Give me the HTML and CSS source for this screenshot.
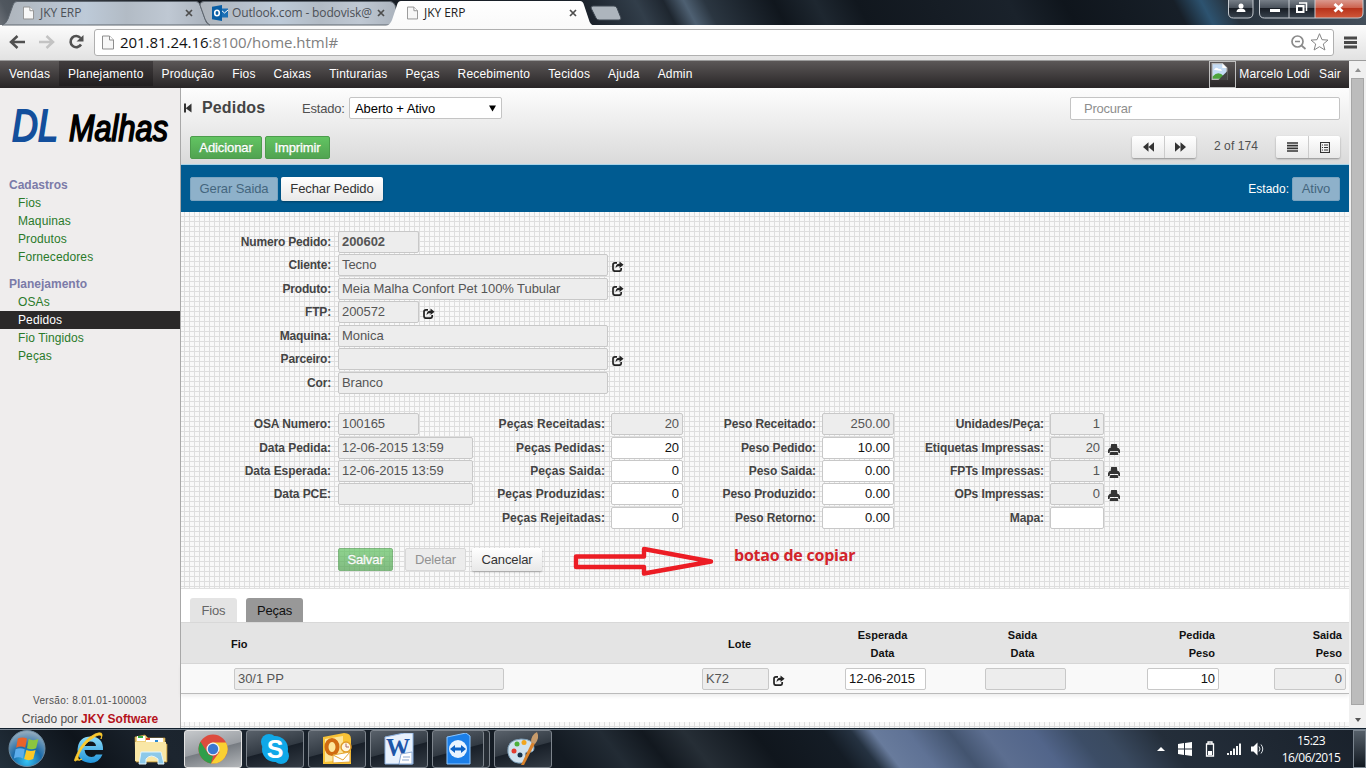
FILE: index.html
```html
<!DOCTYPE html>
<html lang="pt">
<head>
<meta charset="utf-8">
<title>JKY ERP</title>
<link rel="stylesheet" href="styles.css">
</head>
<body>
<svg width="0" height="0" class="defs">
  <defs>
    <symbol id="page" viewBox="0 0 12 14"><path d="M.5.5h7l4 4v9H.5z" fill="#f7f7f7" stroke="#8d8d8d"/><path d="M7.500.5v4h4" fill="#fff" stroke="#8d8d8d"/></symbol>
    <symbol id="x" viewBox="0 0 8 8"><path d="M1 1l6 6M7 1L1 7" stroke="#4d4d4d" stroke-width="1.700"/></symbol>
    <symbol id="share" viewBox="0 0 12 11"><path d="M5 1.800H3Q1 1.800 1 3.800v4.400q0 2 2 2h4.200q2 0 2-2V7" fill="none" stroke="#222" stroke-width="1.700"/><path d="M3.700 7.500C3.500 4 5.200 2.700 7.500 2.700V.6L11.600 3.800 7.500 7V5C5.700 5 4.500 5.700 3.700 7.500z" fill="#222"/></symbol>
    <symbol id="print" viewBox="0 0 12 11"><path d="M3.200 0h5.600l.7 4h-7z" fill="#333"/><path d="M1.500 4h9L12 6v3h-1.500L10 7H2L1.500 9H0V6z" fill="#333"/><path d="M2.300 8h7.400l.7 3H1.600z" fill="#333"/></symbol>
  </defs>
</svg>

<header class="titlebar">
  <svg class="tab-shapes" width="640" height="26" viewBox="0 0 640 26">
    <defs>
      <linearGradient id="tabg" x1="0" x2="1" y1="0" y2="0"><stop offset="0" stop-color="#aeb4bb"/><stop offset=".4" stop-color="#bdcad8"/><stop offset=".6" stop-color="#b2bbc5"/><stop offset=".8" stop-color="#bfc8d3"/><stop offset="1" stop-color="#a9b1bb"/></linearGradient>
      <linearGradient id="tabw" x1="0" x2="0" y1="0" y2="1"><stop offset="0" stop-color="#fff"/><stop offset="1" stop-color="#fafafa"/></linearGradient>
    </defs>
    <path d="M2 25Q6 24 8 19L13 5Q14 1.500 17 1.500H196Q199 1.500 200 5L205 19Q206 24 210 25z" fill="url(#tabg)" stroke="#5e666f"/>
    <path d="M210 25Q207 24 205 19L200 5Q200 1.500 204 1.500H390Q393 1.500 395 5L400 25z" fill="url(#tabg)" stroke="#5e666f"/>
    <path d="M386 26Q390 25 392 20L397 5Q398 1 401 1H580Q583 1 584 5L589 20Q590 25 595 26z" fill="url(#tabw)"/>
    <path d="M593 6H614Q616 6 617 8L621 18Q621 20 619 20H599Q597 20 596 18L591 8Q591 6 593 6z" fill="#adb5bd" stroke="#3d4650"/>
  </svg>
  <div class="tab tab-a"><svg class="pg"><use href="#page"/></svg><span>JKY ERP</span><svg class="cx"><use href="#x"/></svg></div>
  <div class="tab tab-b">
    <svg width="17" height="16" viewBox="0 0 17 16"><path d="M8 3.500h8v9H8z" fill="#1a6fb5"/><path d="M9 5l3.500 3L16 5" fill="none" stroke="#fff"/><path d="M0 1.700L10 0v16L0 14.300z" fill="#0a5fa5"/><ellipse cx="5" cy="8" rx="2.300" ry="2.800" fill="none" stroke="#fff" stroke-width="1.600"/></svg>
    <span>Outlook.com - bodovisk@</span><svg class="cx"><use href="#x"/></svg></div>
  <div class="tab tab-c"><svg class="pg"><use href="#page"/></svg><span>JKY ERP</span><svg class="cx"><use href="#x"/></svg></div>
  <svg class="winctl" width="140" height="20" viewBox="0 0 140 20">
    <defs><linearGradient id="red" x1="0" x2="0" y1="0" y2="1"><stop offset="0" stop-color="#dca096"/><stop offset=".45" stop-color="#cd6450"/><stop offset=".5" stop-color="#b8331b"/><stop offset="1" stop-color="#d0583a"/></linearGradient>
    <linearGradient id="dk" x1="0" x2="0" y1="0" y2="1"><stop offset="0" stop-color="#7c848d"/><stop offset=".45" stop-color="#4a525c"/><stop offset=".5" stop-color="#171d25"/><stop offset="1" stop-color="#39434e"/></linearGradient></defs>
    <path d="M2.500-1V13q0 5 5 5H22q5 0 5-5V-1z" fill="url(#dk)" stroke="#c5cad0"/>
    <circle cx="15" cy="6" r="2.500" fill="#fff"/><path d="M10.500 12q0-3.500 4.500-3.500t4.500 3.500z" fill="#fff"/>
    <path d="M34-1V13q0 5 5 5H89V-1z" fill="url(#dk)"/><path d="M89-1V18H132q5 0 5-5V-1z" fill="url(#red)"/>
    <path d="M33.500-1V13q0 5 5 5H132q5 0 5-5V-1M63 0V18M89 0V18" fill="none" stroke="#c5cad0"/>
    <path d="M44 9h10v3H44z" fill="#fff"/>
    <path d="M73 3h7.500v8" fill="none" stroke="#fff" stroke-width="1.500"/><rect x="71" y="6" width="6.500" height="6" fill="none" stroke="#fff" stroke-width="2"/>
    <path d="M108.500 4l8 7.500M116.500 4l-8 7.500" stroke="#fff" stroke-width="2.800"/>
  </svg>
</header>

<div class="toolbar">
  <svg width="86" height="20" viewBox="0 0 86 20">
    <path d="M3 10H17M9.500 4L3 10l6.500 6" fill="none" stroke="#505050" stroke-width="2.500"/>
    <path d="M31 10H45M38.500 4L45 10l-6.500 6" fill="none" stroke="#c3c3c3" stroke-width="2.500"/>
    <path d="M72.500 6A5.600 5.600 0 1 0 73 12.500" fill="none" stroke="#505050" stroke-width="2.600"/><path d="M75.500 3v6.500h-7z" fill="#505050"/>
  </svg>
  <div class="urlbox">
    <svg class="pg-url"><use href="#page"/></svg>
    <span class="url"><b>201.81.24.16</b>:8100/home.html#</span>
    <svg width="42" height="20" viewBox="0 0 42 20"><circle cx="8.500" cy="9.500" r="5.500" fill="none" stroke="#8b8b8b" stroke-width="1.700"/><path d="M6 9.500h5M12.500 13.500l4 3.500" stroke="#8b8b8b" stroke-width="1.700"/><path d="M30.500 1.700l2.500 6 6 .4-4.700 3.900 1.600 6-5.400-3.300-5.400 3.300 1.600-6L22 8.100l6-.4z" fill="#fff" stroke="#858585"/></svg>
  </div>
  <svg class="menu" width="13" height="13" viewBox="0 0 13 13"><path d="M0 2h13M0 6.500h13M0 11h13" stroke="#484848" stroke-width="2.800"/></svg>
</div>

<div class="viewport">
  <div class="page">
    <nav class="nav">
      <a>Vendas</a><a class="on">Planejamento</a><a>Produção</a><a>Fios</a><a>Caixas</a><a>Tinturarias</a><a>Peças</a><a>Recebimento</a><a>Tecidos</a><a>Ajuda</a><a>Admin</a>
      <div class="user">
        <span class="avatar"><svg width="17" height="17" viewBox="0 0 14 15"><path d="M.5.5h9l4 4v10H.5z" fill="#c5dcf5" stroke="#b9b9b9"/><path d="M9.500.5v4h4z" fill="#fff"/><path d="M2 6q2-3 4-1 3 0 3 2z" fill="#fff"/><path d="M1 14V12q5-6 10 0v2z" fill="#4da33c"/><path d="M6 15L14 7v8z" fill="#444"/></svg></span>
        <span class="name">Marcelo Lodi</span><span>Sair</span>
      </div>
    </nav>
    <div class="body">
      <aside class="side">
        <svg class="logo" width="180" height="88" viewBox="0 0 180 88"><text x="12" y="53" font-size="44" textLength="46" lengthAdjust="spacingAndGlyphs" fill="#134f9c" stroke="#134f9c" stroke-width="2">DL</text><text x="69" y="53" font-size="36" textLength="99" lengthAdjust="spacingAndGlyphs" stroke="#000" stroke-width="1.700">Malhas</text></svg>
        <h4>Cadastros</h4>
        <a>Fios</a><a>Maquinas</a><a>Produtos</a><a>Fornecedores</a>
        <h4>Planejamento</h4>
        <a>OSAs</a><a class="on">Pedidos</a><a>Fio Tingidos</a><a>Peças</a>
        <footer><p class="ver">Versão: 8.01.01-100003</p><p>Criado por <b>JKY Software</b></p></footer>
      </aside>
      <main class="main">
        <section class="head">
          <div class="head-row">
            <svg width="8" height="10" viewBox="0 0 8 10"><path d="M0 .5h2V5L7.500.5v9L2 5.500v4H0z" fill="#333"/></svg>
            <h1>Pedidos</h1><label>Estado:</label>
            <div class="select"><span>Aberto + Ativo</span><svg width="7" height="7" viewBox="0 0 7 7"><path d="M0 .5h7L3.500 6.500z"/></svg></div>
            <div class="search">Procurar</div>
          </div>
          <div class="act-row">
            <span class="btn green w72">Adicionar</span><span class="btn green w65">Imprimir</span>
            <div class="pager"><i><svg width="11" height="10" viewBox="0 0 11 10"><path d="M5.500.3v9.400L0 5zM11 .3v9.400L5.500 5z" fill="#333"/></svg></i><i><svg width="11" height="10" viewBox="0 0 11 10"><path d="M0 .3v9.400L5.500 5zM5.500.3v9.400L11 5z" fill="#333"/></svg></i></div>
            <span class="count">2 of 174</span>
            <div class="pager"><i><svg width="11" height="10" viewBox="0 0 11 10"><path d="M0 1h11M0 3.700h11M0 6.300h11M0 9h11" stroke="#333" stroke-width="1.700"/></svg></i><i><svg width="10" height="11" viewBox="0 0 10 11"><path d="M.5.500h9v10h-9z" fill="none" stroke="#333" stroke-width="1.200"/><path d="M2 3h1M4 3h4M2 5.500h1M4 5.500h4M2 8h1M4 8h4" stroke="#333"/></svg></i></div>
          </div>
        </section>
        <section class="blue">
          <span class="btn dim w88">Gerar Saida</span><span class="btn white w102">Fechar Pedido</span>
          <span class="st">Estado:</span><span class="btn dim w48">Ativo</span>
        </section>
        <section class="form">
          <div class="rows top">
            <div class="r"><label>Numero Pedido:</label><span class="f ro w81"><b>200602</b></span></div>
            <div class="r"><label>Cliente:</label><span class="f ro w270">Tecno</span><svg class="ic"><use href="#share"/></svg></div>
            <div class="r"><label>Produto:</label><span class="f ro w270">Meia Malha Confort Pet 100% Tubular</span><svg class="ic"><use href="#share"/></svg></div>
            <div class="r"><label>FTP:</label><span class="f ro w81">200572</span><svg class="ic"><use href="#share"/></svg></div>
            <div class="r"><label>Maquina:</label><span class="f ro w270">Monica</span></div>
            <div class="r"><label>Parceiro:</label><span class="f ro w270"></span><svg class="ic"><use href="#share"/></svg></div>
            <div class="r"><label>Cor:</label><span class="f ro w270">Branco</span></div>
          </div>
          <div class="cols">
            <div class="rows c1">
              <div class="r"><label>OSA Numero:</label><span class="f ro w81">100165</span></div>
              <div class="r"><label>Data Pedida:</label><span class="f ro w135">12-06-2015 13:59</span></div>
              <div class="r"><label>Data Esperada:</label><span class="f ro w135">12-06-2015 13:59</span></div>
              <div class="r"><label>Data PCE:</label><span class="f ro w135"></span></div>
            </div>
            <div class="rows c2">
              <div class="r"><label>Peças Receitadas:</label><span class="f num ro">20</span></div>
              <div class="r"><label>Peças Pedidas:</label><span class="f num">20</span></div>
              <div class="r"><label>Peças Saida:</label><span class="f num">0</span></div>
              <div class="r"><label>Peças Produzidas:</label><span class="f num">0</span></div>
              <div class="r"><label>Peças Rejeitadas:</label><span class="f num">0</span></div>
            </div>
            <div class="rows c3">
              <div class="r"><label>Peso Receitado:</label><span class="f num ro">250.00</span></div>
              <div class="r"><label>Peso Pedido:</label><span class="f num">10.00</span></div>
              <div class="r"><label>Peso Saida:</label><span class="f num">0.00</span></div>
              <div class="r"><label>Peso Produzido:</label><span class="f num">0.00</span></div>
              <div class="r"><label>Peso Retorno:</label><span class="f num">0.00</span></div>
            </div>
            <div class="rows c4">
              <div class="r"><label>Unidades/Peça:</label><span class="f num ro">1</span></div>
              <div class="r"><label>Etiquetas Impressas:</label><span class="f num ro">20</span><svg class="ic"><use href="#print"/></svg></div>
              <div class="r"><label>FPTs Impressas:</label><span class="f num ro">1</span><svg class="ic"><use href="#print"/></svg></div>
              <div class="r"><label>OPs Impressas:</label><span class="f num ro">0</span><svg class="ic"><use href="#print"/></svg></div>
              <div class="r"><label>Mapa:</label><span class="f num"></span></div>
            </div>
          </div>
          <div class="save-row">
            <span class="btn green faded w55">Salvar</span><span class="btn off w61">Deletar</span><span class="btn white w70">Cancelar</span>
          </div>
          <svg class="arrow" width="144" height="34" viewBox="0 0 144 34"><path d="M5 12.500H73V5L140 17.500 73 29.500V23H5z" fill="none" stroke="#ec1c24" stroke-width="4.400" stroke-linejoin="round"/></svg>
          <span class="note">botao de copiar</span>
        </section>
        <section class="list">
          <div class="tabs"><span class="t1">Fios</span><span class="t2">Peças</span></div>
          <div class="g th"><span class="h1c">Fio</span><span class="h2c">Lote</span><span class="ctr">Esperada<br>Data</span><span class="ctr">Saida<br>Data</span><span class="rgt">Pedida<br>Peso</span><span class="rgt">Saida<br>Peso</span></div>
          <div class="g td"><div class="first"><span class="f ro w270">30/1 PP</span></div><div class="lot"><span class="f ro w67">K72</span><svg class="ic"><use href="#share"/></svg></div><div><span class="f w81">12-06-2015</span></div><div><span class="f ro w81"></span></div><div><span class="f num">10</span></div><div><span class="f num ro">0</span></div></div>
        </section>
      </main>
    </div>
  </div>
  <div class="scroll"><span class="up"></span><span class="thumb"></span><span class="down"></span></div>
</div>

<footer class="taskbar">
  <svg class="launch" width="184" height="40" viewBox="0 0 184 40">
    <defs><radialGradient id="orb" cx=".5" cy=".85" r=".8"><stop offset="0" stop-color="#35c4f5"/><stop offset=".5" stop-color="#1a6aa8"/><stop offset="1" stop-color="#8fa9bd"/></radialGradient>
    <linearGradient id="ie" x1="0" x2="0" y1="0" y2="1"><stop offset="0" stop-color="#8ddcf9"/><stop offset="1" stop-color="#1f93da"/></linearGradient></defs>
    <circle cx="27" cy="19.500" r="18" fill="url(#orb)" stroke="#6c8aa0"/>
    <g transform="translate(-3.800 -3) scale(1.140)"><path d="M19 11q4-2 8 0l-1.500 8q-4-2-8 0z" fill="#e9632a"/><path d="M28.500 11.500q4 2 8.500 0l-2 8q-4 2-8 0z" fill="#8cc63f"/><path d="M17 20.500q4-2 8 0l-1.500 8q-4-2-8 0z" fill="#5cadec"/><path d="M26.500 21q4 2 8 0l-2 8q-4 2-8 0z" fill="#fbc827"/></g>
    <path d="M103 21H84.500q1 7 7 7 3 0 4.500-2.500h6.500Q99 34 90.500 34 77.500 33 77.500 20.500 78.500 7.500 91 7.500 103.500 8 103 21zM84.700 17H96q-.5-4.500-5.500-4.500t-5.800 4.500z" fill="url(#ie)"/>
    <path d="M77 31q-5 4 0-6Q83 11 95 5q10-4 6 5 2-6-5-3-12 7-17 18-3 8 3 5-2 2-5 1z" fill="#fbc92e" stroke="#fbc92e" stroke-width=".8"/>
    <path d="M135 8l10-2 3 3h17v6h2v18h-31z" fill="#efd17c" stroke="#c19a42" stroke-width=".7"/><path d="M137 7h8v5h-8zM146 9h17v5h-17z" fill="#fff"/><path d="M138 7h5v2h-5z" fill="#36a93f"/><path d="M146 9h4v2h-4z" fill="#d7402b"/><path d="M155 11h3v2h-3z" fill="#2c8bd2"/><path d="M135 13h31v19h-31z" fill="#f9e7a6"/><path d="M139 35l2-12h20l3 12h-6v-5q-7-6-12 0v5z" fill="#8dc9e9" stroke="#e2f5fd"/>
  </svg>
  <div class="tb act"><svg width="30" height="30" viewBox="0 0 30 30"><circle cx="15" cy="15" r="14.500" fill="#dd4b3e"/><path d="M2.500 7.700L11 21l4 1-2 7.400A14.500 14.500 0 0 1 2.500 7.700z" fill="#2f9e4a"/><path d="M14 8.500H28A14.500 14.500 0 0 1 13 29.400L21.500 18z" fill="#f9d032"/><circle cx="15" cy="15" r="6.500" fill="#f2f2f2"/><circle cx="15" cy="15" r="5.200" fill="#3b78d1"/></svg></div>
  <div class="tb"><svg width="30" height="30" viewBox="0 0 30 30"><circle cx="9" cy="8" r="8" fill="#10a8e8"/><circle cx="21" cy="22" r="8" fill="#10a8e8"/><circle cx="15" cy="15" r="13" fill="#10a8e8"/><text x="15" y="24" class="sk" text-anchor="middle">S</text></svg></div>
  <div class="tb"><svg width="30" height="32" viewBox="0 0 30 32"><path d="M1 4L22 0q7 0 7 6V31H1z" fill="#f8c236"/><path d="M3 6l18-3v24l-18 2z" fill="#fde69b"/><ellipse cx="10" cy="14" rx="5.500" ry="7" fill="none" stroke="#d06b12" stroke-width="4"/><circle cx="24" cy="14" r="5" fill="#fff6df" stroke="#e09c29" stroke-width="1.500"/><path d="M24 10.500V14h3" fill="none" stroke="#a66"/><path d="M11 22l17-3v10l-17 1z" fill="#fff" stroke="#e3a636"/><path d="M11 22l10 5 7-8" fill="none" stroke="#e3a636"/></svg></div>
  <div class="tb"><svg width="30" height="32" viewBox="0 0 30 32"><path d="M1 4L20 0h9V31H1z" fill="#e8f1fc" stroke="#8cb1e0"/><text x="14" y="23" class="wd" text-anchor="middle" textLength="24" lengthAdjust="spacingAndGlyphs">W</text><path d="M17 21l11-2v12H15z" fill="#fff" stroke="#8aa9d3"/><path d="M19 24h7M18 27h7" stroke="#8ba7cf"/></svg></div>
  <div class="tb tv"><svg width="26" height="32" viewBox="0 0 26 32"><path d="M2 4L21 0l4 3v28H2z" fill="#1c7fe8" stroke="#8cc6ff"/><circle cx="13" cy="16" r="9" fill="#e9f4ff"/><path d="M5 16l5-4v2.500h6V12l5 4-5 4v-2.500h-6V20z" fill="#0d62c5"/></svg></div>
  <div class="tb"><svg width="34" height="34" viewBox="0 0 34 34"><path d="M2 21Q0 8 15 7q13 0 13 9 0 5-6 4-4 0-2 5 0 7-8 6Q4 30 2 21z" fill="#cfe1ee" stroke="#7b9db6"/><circle cx="8" cy="19" r="2.500" fill="#e33b2e"/><circle cx="11" cy="12" r="2.500" fill="#4caf3a"/><circle cx="18" cy="10.500" r="2.500" fill="#f2a51d"/><circle cx="14" cy="23" r="2.500" fill="#18324a"/><path d="M15 33L26 10l3 1.500L18 33z" fill="#d9822b"/><path d="M25 10q0-7 6-10 3 6-2 12z" fill="#c79b6b"/></svg></div>
  <svg class="tray" width="112" height="20" viewBox="0 0 112 20">
    <path d="M0 12l4-4 4 4z" fill="#fff"/>
    <path d="M21 5l6-1v5.500h-6zM28 4l7-1v6.500h-7zM21 10.500h6V16l-6-1zM28 10.500h7V17l-7-1z" fill="#fff"/>
    <path d="M49.500 5h7v12h-7zM51 3h4v2h-4z" fill="none" stroke="#fff" stroke-width="1.300"/><path d="M51 12h4v4h-4z" fill="#fff"/>
    <path d="M71 16v-2M74 16v-4M77 16V9.500M80 16V7M83 16V4.500" stroke="#fff" stroke-width="1.900"/>
    <path d="M94 7.500h2.500l4-4v13l-4-4H94z" fill="#fff"/><path d="M102 7.500q2 2.500 0 5M104 5.500q3.500 4.500 0 9" fill="none" stroke="#dfe5ea"/>
  </svg>
  <div class="clock">15:23<br>16/06/2015</div>
  <div class="desk"></div>
</footer>
</body>
</html>
```
FILE: styles.css
```css
* { box-sizing: border-box; }
body { margin: 0; width: 1366px; height: 768px; overflow: hidden; display: flex; flex-direction: column; font-family: "Liberation Sans", Arial, sans-serif; font-size: 12px; color: #505050; }
h1, h4, p { margin: 0; }
svg { flex: none; display: block; }
.defs { position: absolute; }

.titlebar { position: relative; height: 25px; flex: none; display: flex; background: linear-gradient(62deg, #6b7077 0, #50575f 1%, #15191f 14%, #1b222b 43%, #323e4a 47%, #1e262f 49%, #4e6072 50.500%, #2b3641 52%, #10161d 57%, #1e2730 60%, #11171e 63%, #1a222b 74%, #0f151c 78%, #171f28 86%, #2d5370 88%, #27323d 90%, #46515d 100%); }
.tab-shapes { position: absolute; left: 0; top: 0; }
.tab { position: relative; display: flex; align-items: center; height: 25px; font: 12px "Open Sans", sans-serif; color: #4c5056; }
.tab span { flex: 1; white-space: nowrap; letter-spacing: -.05px; }
.tab-a { width: 193px; padding-left: 23px; }
.tab-b { width: 192px; padding-left: 19px; }
.tab-c { width: 192px; padding-left: 22px; color: #222; }
.tab .pg { width: 11px; height: 14px; margin-right: 6px; }
.tab-b span { padding-left: 3px; letter-spacing: -.14px; }
.cx { width: 8px; height: 8px; }
.winctl { margin-left: auto; }

.toolbar { height: 36px; flex: none; display: flex; align-items: center; padding: 0 9px 1px 8px; background: linear-gradient(#fcfcfc, #e2e2e2); border-bottom: 1px solid #9b9b9b; }
.urlbox { display: flex; align-items: center; width: 1240px; height: 27px; padding: 0 2px 0 7px; background: #fff; border: 1px solid #b0b0b0; border-radius: 3px; }
.pg-url { width: 12px; height: 15px; margin-right: 6px; }
.url { flex: 1; font: 15px "Open Sans", sans-serif; color: #808080; letter-spacing: -.04px; }
.url b { font-weight: 400; color: #111; }
.menu { margin-left: 10px; }

.viewport { flex: 1; min-height: 0; display: flex; }
.page { width: 1349px; display: flex; flex-direction: column; }
.nav { height: 27px; display: flex; background: linear-gradient(#5b5757, #282526); color: #fff; line-height: 26px; letter-spacing: .17px; }
.nav a { padding: 0 9px; height: 25px; }
.nav .on { background: linear-gradient(#413d3e, #211e1f); }
.user { margin-left: auto; display: flex; padding-right: 8px; }
.avatar { width: 27px; height: 27px; border: 1px solid #c0c0c0; padding: 1px; }
.name { margin: 0 9px 0 3px; }

.body { flex: 1; min-height: 0; display: flex; }
.side { width: 181px; flex: none; background: #efeded; border-right: 1px solid #a8a8a8; display: flex; flex-direction: column; line-height: 18px; letter-spacing: .1px; }
.logo { overflow: visible; }
.logo text { font-family: "Liberation Sans", Arial, sans-serif; font-style: italic; }
.side h4 { font-size: 12px; color: #7b7ba8; padding-left: 9px; letter-spacing: 0; }
.side a + h4 { margin-top: 9px; }
.side a { color: #2a7a2a; padding-left: 18px; }
.side .on { background: #2b2929; color: #fff; }
.side footer { margin-top: auto; text-align: center; letter-spacing: 0; }
.side .ver { font-size: 10px; letter-spacing: .33px; }
.side footer b { color: #b5121b; }

.main { flex: 1; min-width: 0; display: flex; flex-direction: column; background-color: #f9f9f9; background-image: linear-gradient(#dedede 1px, transparent 1px), linear-gradient(90deg, #dedede 1px, transparent 1px); background-size: 5px 5px; background-position: 0 3px, 3px 0; }
.head { height: 77px; flex: none; background: linear-gradient(#fdfdfd, #dadada); border-bottom: 1px solid #a9d3e8; padding-top: 8px; }
.head-row { display: flex; align-items: center; height: 24px; padding: 0 9px 0 3px; }
.head h1 { font-size: 16px; line-height: 24px; margin: 0 37px 0 10px; color: #444; width: 63px; letter-spacing: .15px; }
.head label { font-size: 13px; letter-spacing: -.2px; width: 47px; }
.select { display: flex; align-items: center; justify-content: space-between; width: 153px; height: 22px; background: #fff; border: 1px solid #c4c4c4; border-radius: 2px; padding: 0 5px; color: #000; font-size: 13px; letter-spacing: -.08px; }
.search { margin-left: auto; width: 270px; height: 23px; border: 1px solid #c4c4c4; border-radius: 2px; background: #fff; color: #8e8e8e; font-size: 13px; line-height: 21px; padding-left: 13px; letter-spacing: -.25px; }
.act-row { display: flex; align-items: center; gap: 3px; height: 24px; margin-top: 15px; padding: 0 9px; }
.btn { display: block; height: 23px; line-height: 23px; border-radius: 2px; text-align: center; font-size: 13px; white-space: nowrap; letter-spacing: -.1px; }
.green { background: linear-gradient(#62c462, #51a351); border: 1px solid #4c9c4c; color: #fff; line-height: 21px; text-shadow: 0 -1px 0 rgba(0,0,0,.2); -webkit-text-stroke: .3px #fff; }
.white { background: linear-gradient(#fff, #e8e8e8); color: #333; box-shadow: 0 1px 2px rgba(0,0,0,.3); }
.dim { background: #8eb1ca; border: 1px solid #7ba4c0; color: #44667e; line-height: 22px; }
.faded { opacity: .7; }
.off { background: #ececec; border: 1px solid #d8d8d8; color: #929292; line-height: 21px; }
.pager { display: flex; height: 22px; box-shadow: 0 1px 2px rgba(0,0,0,.35); border-radius: 2px; background: linear-gradient(#fff, #e9e9e9); }
.pager i { width: 32px; display: flex; align-items: center; justify-content: center; }
.pager i + i { border-left: 1px solid #ccc; }
.act-row .pager:first-of-type { margin-left: auto; }
.count { width: 74px; text-align: center; padding-bottom: 2px; letter-spacing: .1px; }

.blue { height: 47px; flex: none; background: #005b91; display: flex; align-items: center; padding: 0 9px; gap: 3px; }
.blue .btn { height: 24px; }
.blue .white { line-height: 24px; }
.st { margin-left: auto; color: #fff; }

.form { position: relative; flex: none; height: 376px; padding-top: 19px; }
.r { display: flex; height: 23.450px; }
.r label { font-weight: 700; text-align: right; line-height: 23px; margin-right: 7px; letter-spacing: -.08px; white-space: nowrap; color: #444; }
.f { display: block; height: 22px; border: 1px solid #c8c8c8; border-radius: 2px; background: #fff; color: #111; font-size: 13px; line-height: 19px; padding: 0 3px; white-space: nowrap; letter-spacing: -.06px; }
.f.ro { background: #ededed; color: #555; }
.num { width: 72px; text-align: right; }
.ic { width: 12px; height: 11px; margin: 7px 0 0 4px; }
.top label { width: 150px; letter-spacing: -.18px; }
.cols { display: flex; margin-top: 18px; height: 117px; }
.c1 { width: 292px; } .c1 label { width: 150px; }
.c2 { width: 211px; } .c2 label { width: 132px; margin-right: 6px; letter-spacing: .06px; }
.c3 { width: 210px; } .c3 label { width: 132px; margin-right: 6px; }
.c4 label { width: 150px; margin-right: 6px; } .c4 .num { width: 54px; }
.save-row { display: flex; margin-top: 18px; padding-left: 157px; }
.save-row .off { margin: 0 6px 0 12px; }
.arrow { position: absolute; left: 390px; top: 332px; }
.note { position: absolute; left: 553px; top: 332px; font: 700 16px/22px "Open Sans", sans-serif; color: #d2232a; letter-spacing: -.22px; white-space: nowrap; }

.w48 { width: 48px; } .w55 { width: 55px; } .w61 { width: 61px; } .w65 { width: 65px; } .w67 { width: 67px; } .w70 { width: 70px; } .w72 { width: 72px; } .w81 { width: 81px; } .w88 { width: 88px; } .w102 { width: 102px; } .w135 { width: 135px; } .w270 { width: 270px; }

.list { height: 134px; background: #fff; border-top: 1px solid #e0e0e0; flex: none; }
.tabs { display: flex; gap: 9px; padding: 9px 9px 0; height: 33px; font-size: 13px; line-height: 25px; text-align: center; letter-spacing: -.2px; }
.tabs span { border-radius: 3px 3px 0 0; }
.t1 { width: 47px; background: #e4e4e4; color: #666; }
.t2 { width: 57px; background: #989898; color: #111; }
.g { display: grid; grid-template-columns: 521px 143px 140px 162px 127px 75px; }
.th { height: 42px; background: #e4e4e4; border-top: 1px solid #d8d8d8; border-bottom: 1px solid #d8d8d8; font-weight: 700; font-size: 11px; line-height: 18px; color: #111; align-items: center; padding-top: 2px; }
.h1c { padding-left: 50px; } .h2c { padding-left: 26px; }
.ctr { width: 75px; text-align: center; }
.rgt { width: 68px; text-align: right; }
.td { height: 30px; padding-top: 4px; background: #f9f9f9; border-bottom: 1px solid #bbb; box-shadow: 0 2px 4px rgba(0,0,0,.08); }
.first { padding-left: 53px; }
.lot { display: flex; }

.scroll { width: 17px; background: #f0f0f0; display: flex; flex-direction: column; align-items: center; padding: 7px 0 6px; }
.up { border: 3.500px solid transparent; border-bottom: 4px solid #8f8f8f; border-top: 0; }
.thumb { width: 13px; flex: 1; margin: 6px 0 13px; background: #bcbcbc; border: 1px solid #a6a6a6; }
.down { border: 3.500px solid transparent; border-top: 4px solid #555; border-bottom: 0; }

.taskbar { height: 40px; flex: none; display: flex; border-top: 1px solid #11202d; box-shadow: inset 0 1px 0 #76828e; background: linear-gradient(52deg, #23303c 0, #0e141b 7%, #1c252f 13%, #131a22 41%, #222b34 45%, #12181f 48%, #262e36 51%, #10161d 56%, #141c25 61%, #253241 63%, #687b9c 64.500%, #5f7295 67%, #43546f 70%, #5c6e90 72.500%, #52658a 76%, #3c4d66 79%, #3a4a60 81%, #242e3a 85%, #19212b 100%); align-items: flex-start; }
.tb { width: 58px; height: 38px; margin: 1px 4px 0 0; border: 1px solid #7d848c; border-radius: 3px; background: linear-gradient(165deg, #59616a 0, #323a43 50%, #181f28 52%, #333b44); display: flex; align-items: center; justify-content: center; flex: none; }
.tb.act { background: linear-gradient(165deg, #c5c8cb 0, #9a9ea3 50%, #777c82 52%, #b3b6b9); border-color: #e4e4e4; }
.tv { box-shadow: inset -5px 0 0 #262d35, inset -6px 0 0 #7d848c; padding-right: 6px; }
.sk { font: 700 25px "Liberation Sans", sans-serif; fill: #fff; }
.wd { font: 700 25px "Liberation Serif", serif; fill: #1e56a8; }
.tray { margin: 10px 0 0 auto; }
.clock { width: 84px; color: #fff; text-align: center; font: 12px/17px "Open Sans", sans-serif; letter-spacing: -.5px; padding-top: 3px; }
.desk { width: 13px; height: 38px; margin-top: 1px; border: 1px solid #7a848e; background: linear-gradient(#555f69, #111820); }
```
